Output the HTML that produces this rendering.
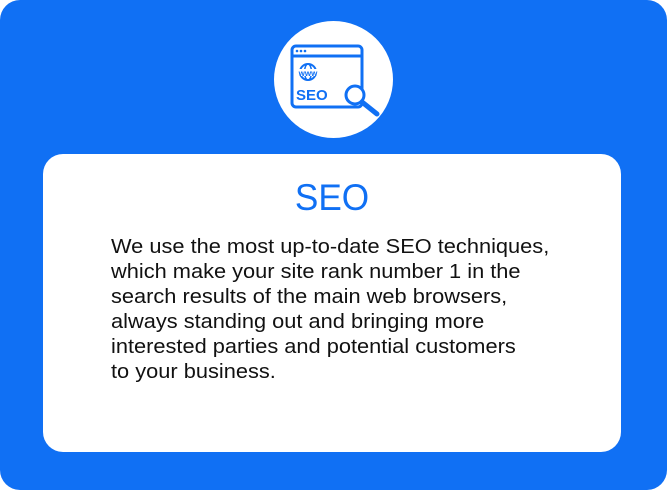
<!DOCTYPE html>
<html><head><style>
html,body{margin:0;padding:0;background:#fff;}
.wrap{position:relative;width:667px;height:492px;overflow:hidden;background:#fff;}
.blue{position:absolute;left:0;top:0;width:667px;height:490px;background:#1070F4;border-radius:20px;}
.circle{position:absolute;left:274px;top:21px;width:119px;height:117px;border-radius:50%;background:#fff;}
.card{position:absolute;left:43px;top:154px;width:578px;height:298px;background:#fff;border-radius:20px;}
.title{position:absolute;left:0;width:578px;top:23px;text-align:center;font:37px "Liberation Sans",sans-serif;color:#1070F4;transform:scaleX(0.95);}
.body{position:absolute;left:68px;top:81px;font:20px/25px "Liberation Sans",sans-serif;color:#111;white-space:nowrap;transform:scaleX(1.09);transform-origin:0 0;}
</style></head><body><div class="wrap">
<div class="blue"></div>
<div class="circle"></div>
<svg style="position:absolute;left:0;top:0" width="667" height="160">
<g fill="none" stroke="#1070F4" stroke-width="3">
<rect x="292" y="46" width="70" height="61" rx="4"/>
<line x1="292" y1="56" x2="362" y2="56"/>
<circle cx="308" cy="72" r="8" stroke-width="2"/>
<ellipse cx="308" cy="72" rx="3.5" ry="8" stroke-width="1.5"/>
<circle cx="355" cy="95" r="9" fill="#fff"/>
<line x1="362" y1="102" x2="377" y2="114" stroke-width="5" stroke-linecap="round"/>
</g>
<circle cx="297" cy="51" r="1.3" fill="#1070F4"/><circle cx="301" cy="51" r="1.3" fill="#1070F4"/><circle cx="305" cy="51" r="1.3" fill="#1070F4"/>
<rect x="297" y="69" width="22" height="7" fill="#fff"/>
<text x="308" y="76" text-anchor="middle" font-family="Liberation Sans" font-weight="bold" font-size="8" fill="#1070F4">www</text>
<text x="296" y="100" font-family="Liberation Sans" font-weight="bold" font-size="15" fill="#1070F4">SEO</text>
</svg>
<div class="card">
<div class="title">SEO</div>
<div class="body">
<div>We use the most up-to-date SEO techniques,</div>
<div>which make your site rank number 1 in the</div>
<div>search results of the main web browsers,</div>
<div>always standing out and bringing more</div>
<div>interested parties and potential customers</div>
<div>to your business.</div>
</div>
</div>
</div></body></html>
